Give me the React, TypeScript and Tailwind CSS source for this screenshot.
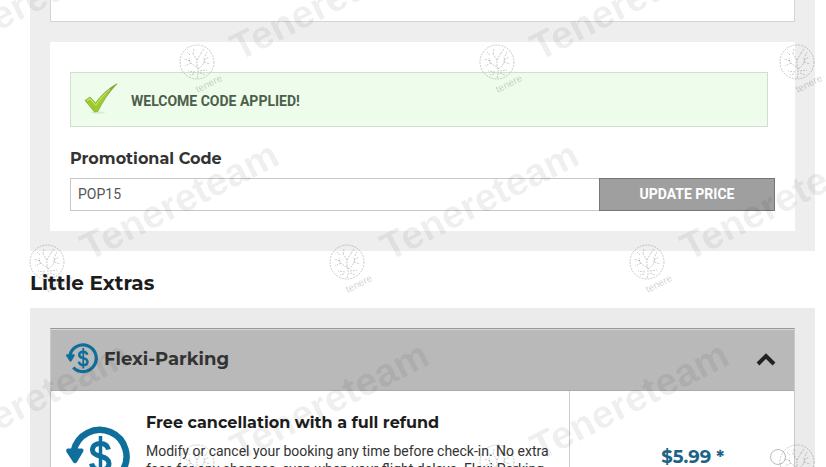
import { useState } from "react";

const RefundIcon = ({ className }: { className?: string }) => (
  <svg viewBox="0 0 64 64" className={className} xmlns="http://www.w3.org/2000/svg" fill="none" aria-hidden="true">
    <path d="M7.7 25A26.700 26.700 0 1 1 14.500 49" stroke="#0f6f9c" strokeWidth="6.500" />
    <path d="M1.500 22.500H16Q18.500 23.500 17 26L11 36Q9 38.500 7 36L.5 26Q-.5 23.500 1.500 22.500Z" fill="#0f6f9c" />
    <path
      d="M42.500 23.500C41.500 19.500 38.500 17.500 34.500 17.500C29.500 17.500 26.500 20 26.500 24C26.500 28 30 29.300 34.500 30.300C39.500 31.500 43 33 43 37.500C43 41.500 39.500 44 34.500 44C29.500 44 26.500 41.500 25.500 37.500"
      stroke="#0f6f9c"
      strokeWidth="5"
    />
    <path d="M34.500 10V51" stroke="#0f6f9c" strokeWidth="3.500" />
  </svg>
);

const TickIcon = () => (
  <svg viewBox="0 0 36 34" width="36" height="34" xmlns="http://www.w3.org/2000/svg" aria-hidden="true">
    <defs>
      <linearGradient id="tick" x1="1" y1="0" x2="0.300" y2="1">
        <stop offset="0" stopColor="#6d8a4c" />
        <stop offset="0.450" stopColor="#a2cb35" />
        <stop offset="1" stopColor="#9bc92a" />
      </linearGradient>
    </defs>
    <ellipse cx="15" cy="29.500" rx="7" ry="1" fill="#dbe8d7" />
    <path d="M2 17.500L7 14L12.500 20C18 12.500 25 5.500 34 .8C26 9 19.500 19 14.800 28.500L11.500 29Z" fill="url(#tick)" stroke="#86ad35" strokeWidth="0.800" />
    <path d="M4 17.500L7 15.700L12.700 22.300C17 16 22 10.500 27 6.500" fill="none" stroke="#cfe87c" strokeWidth="1" />
  </svg>
);

const Badge = () => (
  <g fill="none" stroke="#000" strokeOpacity="0.2" strokeWidth="1">
    <circle r="17" strokeDasharray="2 1" />
    <path
      d="M0 16C3 9 -1 4 0 -2M1 7C6 4 8 0 7 -5M0 5C-5 3 -8 0 -8 -4M0 -2L-4 -8M0 -2L4 -9M7 -2L12 -5M7 0L13 2M-7 -1L-13 -3M-6 1L-12 4M3 9L10 8M-2 10L-9 9M-7 -7L-10 -10M4 -9L7 -13M-4 -8L-3 -13M8 -6L10 -10M3 11L8 13M-3 12L-7 13"
      strokeDasharray="2 1"
    />
    <text
      transform="translate(12 22) rotate(-27)"
      y="3"
      textAnchor="middle"
      fontSize="10"
      fill="#000"
      fillOpacity="0.2"
      stroke="none"
      className="font-['Liberation_Sans',sans-serif]"
    >
      tenere
    </text>
  </g>
);

// Brand marks repeat every 300px, odd rows are shifted by half a step
const Watermark = () => {
  const rows = [0, 1, 2];
  const cols = [-1, 0, 1, 2];

  return (
    <svg className="pointer-events-none absolute inset-0 h-full w-full" aria-hidden="true">
      {rows.map((row) =>
        cols.map((col) => {
          const x = col * 300 + (row % 2 ? 30 : 180);
          const y = row * 200;
          return (
            <g key={`${row}-${col}`}>
              <g transform={`translate(${x + 17} ${y + 62})`}>
                <Badge />
              </g>
              <text
                transform={`translate(${x + 149} ${y}) rotate(-27)`}
                y="14"
                textAnchor="middle"
                fontSize="39"
                fill="#000"
                fillOpacity="0.07"
                className="font-['Liberation_Sans',sans-serif] font-bold"
              >
                Tenereteam
              </text>
            </g>
          );
        })
      )}
    </svg>
  );
};

export default function App() {
  const [code, setCode] = useState("POP15");
  const [open, setOpen] = useState(true);
  const [selected, setSelected] = useState(false);

  return (
    <div className="relative h-screen overflow-hidden bg-white pr-[11px] pl-[30px] font-[Roboto,sans-serif] text-[#222]">
      {/* Promo code */}
      <section className="bg-[#eeeeee] px-5 pb-5">
        <div className="h-[22px] border border-t-0 border-[#d4d4d4] bg-white" />
        <div className="mt-5 bg-white px-5 pt-[30px] pb-5">
          <div className="mr-[7px] flex h-[55px] items-center gap-3 border border-[#d3ddd0] bg-[#eefdeb] pl-3">
            <TickIcon />
            <p className="pt-0.5 text-sm font-bold text-[#4d5f4b]">WELCOME CODE APPLIED!</p>
          </div>
          <label htmlFor="promo" className="mt-5 block font-[Montserrat,sans-serif] text-base leading-6 font-bold text-[#333]">
            Promotional Code
          </label>
          <form className="mt-[7px] flex h-[33px]" onSubmit={(e) => e.preventDefault()}>
            <input
              id="promo"
              value={code}
              onChange={(e) => setCode(e.target.value)}
              className="min-w-0 flex-1 border border-r-0 border-[#c8c8c8] bg-white px-[7px] pb-0.5 text-sm text-[#555] outline-none"
            />
            <button type="submit" className="w-44 border border-[#757575] bg-[#9f9f9f] pb-0.5 text-sm font-bold text-white">
              UPDATE PRICE
            </button>
          </form>
        </div>
      </section>

      <h2 className="mt-4 font-[Montserrat,sans-serif] text-xl leading-8 font-bold text-[#1c1c1c]">Little Extras</h2>

      {/* Extras */}
      <section className="mt-[9px] bg-[#ebebeb] p-5">
        <div className="border border-[#c9c9c9] border-t-[#999] bg-white">
          <h3>
            <button
              type="button"
              aria-expanded={open}
              onClick={() => setOpen(!open)}
              className="flex h-[62px] w-full items-center border-t border-b border-t-[#d6d6d6] border-b-[#aaa] bg-[#b9b9b9] pr-[18px] pb-0.5 pl-[15px] text-left"
            >
              <RefundIcon className="h-8 w-8" />
              <span className="ml-[6px] flex-1 font-[Montserrat,sans-serif] text-lg font-bold text-[#333]">Flexi-Parking</span>
              <svg width="20" height="14" viewBox="0 0 20 14" fill="none" aria-hidden="true">
                <path d="M2 12L10 4L18 12" stroke="#222" strokeWidth="4" />
              </svg>
            </button>
          </h3>
          {open && (
            <div className="flex">
              <div className="flex min-w-0 flex-1 gap-4 border-r border-[#ccc] pt-5 pr-5 pb-5 pl-[15px]">
                <RefundIcon className="mt-[15px] h-16 w-16 shrink-0" />
                <div>
                  <h4 className="font-[Montserrat,sans-serif] text-base leading-6 font-bold text-[#1c1c1c]">
                    Free cancellation with a full refund
                  </h4>
                  <p className="mt-[7px] text-sm leading-[18px] text-[#333]">
                    Modify or cancel your booking any time before check-in. No extra fees for any changes, even when your flight delays. Flexi-Parking
                  </p>
                </div>
              </div>
              <label className="flex w-56 items-start justify-end gap-[46px] pt-[54px] pr-2">
                <span className="font-[Montserrat,sans-serif] text-lg leading-6 font-bold text-[#1b6488]">$5.99 *</span>
                <input
                  type="radio"
                  checked={selected}
                  onChange={() => setSelected(true)}
                  className="mt-1 h-4 w-4 appearance-none rounded-full border border-[#bbb] bg-white"
                />
              </label>
            </div>
          )}
        </div>
      </section>

      <Watermark />
    </div>
  );
}
